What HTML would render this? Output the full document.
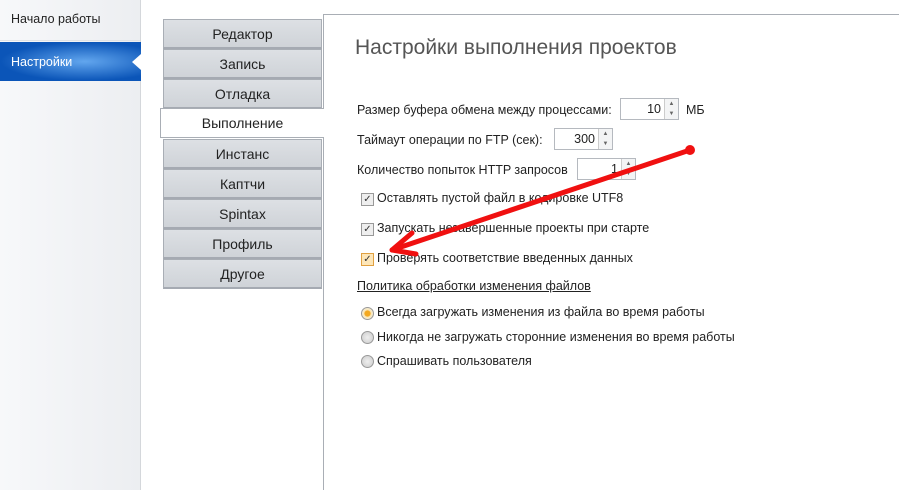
<!DOCTYPE html><html><head><meta charset="utf-8"><style>
body{margin:0;width:899px;height:490px;position:relative;background:#fff;font-family:"Liberation Sans",sans-serif;font-size:12px;color:#222;overflow:hidden}
.a{position:absolute}
.side{left:0;top:0;width:140px;height:490px;background:linear-gradient(90deg,#f7f8fa,#eceef1);border-right:1px solid #d4d7db}
.tab{position:absolute;left:163px;width:159px;background:linear-gradient(#dde0e4,#cfd3d8);border:1px solid #a9aeb5;border-bottom:2px solid #a5aab2;text-align:center;line-height:28px;font-size:14px;color:#222;box-sizing:border-box;height:30px}
.t{position:absolute;white-space:nowrap;font-size:12.5px}
.spin{position:absolute;height:22px;border:1px solid #b5b9bf;background:#fff;box-sizing:border-box;text-align:right;line-height:20px;font-size:12.5px}
.spin b{position:absolute;right:0;top:0;width:13px;height:20px;border-left:1px solid #ccc;background:#f3f4f5;font-weight:normal;font-size:6px;line-height:10px;text-align:center;color:#666}
.cb{position:absolute;width:11px;height:11px;border:1px solid #999;background:#eee;font-size:10px;line-height:11px;text-align:center;color:#333}
.rd{position:absolute;width:11px;height:11px;border:1px solid #999;border-radius:50%;background:radial-gradient(#eee,#ccc)}
</style></head><body>
<div class="a side"></div>
<div class="t" style="left:11px;top:12px">Начало работы</div>
<div class="a" style="left:0;top:40px;width:140px;height:1px;background:#dfe2e6"></div>
<div class="a" style="left:0;top:42px;width:141px;height:39px;background:radial-gradient(ellipse at 60% 50%,#62a6ee,#0b55b8 70%)"></div>
<div class="t" style="left:11px;top:55px;color:#fff">Настройки</div>
<div class="a" style="left:132px;top:54px;width:0;height:0;border-top:8px solid transparent;border-bottom:8px solid transparent;border-right:9px solid #fff"></div>
<div class="a" style="left:323px;top:14px;width:1px;height:476px;background:#a9aeb5"></div>
<div class="a" style="left:323px;top:14px;width:576px;height:1px;background:#a9aeb5"></div>
<div class="tab" style="top:19px">Редактор</div>
<div class="tab" style="top:49px">Запись</div>
<div class="tab" style="top:79px">Отладка</div>
<div class="tab" style="top:108px;left:160px;width:164px;background:#fff;border-right:none;border-bottom:1px solid #a9aeb5">Выполнение</div>
<div class="tab" style="top:139px">Инстанс</div>
<div class="tab" style="top:169px">Каптчи</div>
<div class="tab" style="top:199px">Spintax</div>
<div class="tab" style="top:229px">Профиль</div>
<div class="tab" style="top:259px">Другое</div>
<div class="t" style="left:355px;top:36px;font-size:21px;color:#555">Настройки выполнения проектов</div>
<div class="t" style="left:357px;top:103px">Размер буфера обмена между процессами:</div>
<div class="spin" style="left:620px;top:98px;width:59px;padding-right:17px">10<b>▲<br>▼</b></div>
<div class="t" style="left:686px;top:103px">МБ</div>
<div class="t" style="left:357px;top:133px">Таймаут операции по FTP (сек):</div>
<div class="spin" style="left:554px;top:128px;width:59px;padding-right:17px">300<b>▲<br>▼</b></div>
<div class="t" style="left:357px;top:163px">Количество попыток HTTP запросов</div>
<div class="spin" style="left:577px;top:158px;width:59px;padding-right:17px">1<b>▲<br>▼</b></div>
<div class="cb" style="left:361px;top:193px">✓</div><div class="t" style="left:377px;top:191px">Оставлять пустой файл в кодировке UTF8</div>
<div class="cb" style="left:361px;top:223px">✓</div><div class="t" style="left:377px;top:221px">Запускать незавершенные проекты при старте</div>
<div class="cb" style="left:361px;top:253px;border-color:#e0a040;background:#fde6b8">✓</div><div class="t" style="left:377px;top:251px">Проверять соответствие введенных данных</div>
<div class="t" style="left:357px;top:279px;text-decoration:underline">Политика обработки изменения файлов</div>
<div class="rd" style="left:361px;top:307px;background:radial-gradient(#f3a820 35%,#fbe7b5 45%,#eee)"></div><div class="t" style="left:377px;top:305px">Всегда загружать изменения из файла во время работы</div>
<div class="rd" style="left:361px;top:331px"></div><div class="t" style="left:377px;top:330px">Никогда не загружать сторонние изменения во время работы</div>
<div class="rd" style="left:361px;top:355px"></div><div class="t" style="left:377px;top:354px">Спрашивать пользователя</div>
<svg class="a" style="left:0;top:0" width="899" height="490"><g stroke="#f01010" stroke-width="5" fill="none" stroke-linecap="round"><path d="M690 150 L392 250"/><path d="M392 250 L412 233 M392 250 L416 254"/></g><circle cx="690" cy="150" r="5" fill="#f01010"/></svg>
</body></html>
